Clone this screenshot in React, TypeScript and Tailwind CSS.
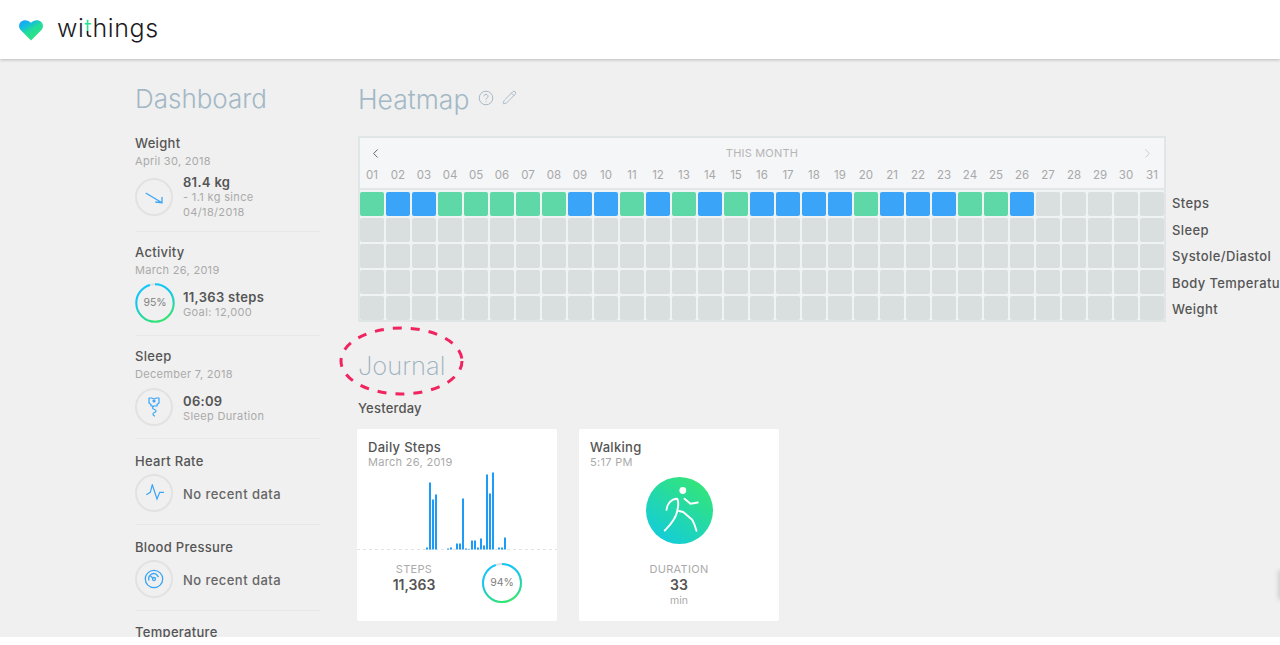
import React from "react";
import { Pencil, ChevronLeft, ChevronRight } from "lucide-react";

const days = Array.from({ length: 31 }, (_, i) => String(i + 1).padStart(2, "0"));
const steps = "gbbgggggbbgbgbgbbbbgbbbggb".split("");
const labels = ["Steps", "Sleep", "Systole/Diastol", "Body Temperature", "Weight"];
const bars = [2, 67, 50, 55, 0, 0, 0, 1, 2, 0, 6, 6, 51, 1, 0.6, 9, 9, 2, 11, 4, 75, 56, 77, 0, 2, 2, 12];

function IconCircle({ children }: { children: React.ReactNode }) {
  return (
    <div className="flex h-[38px] w-[38px] shrink-0 items-center justify-center rounded-full border-2 border-[#e2e2e2]">
      {children}
    </div>
  );
}

function Ring({ id, pct, size, label, r, sw }: { id: string; pct: number; size: number; label: string; r: number; sw: number }) {
  const c = 2 * Math.PI * r;
  return (
    <div className="relative flex shrink-0 items-center justify-center" style={{ width: size, height: size }}>
      <svg width={size} height={size} viewBox={`0 0 ${size} ${size}`} className="absolute inset-0">
        <defs>
          <linearGradient id={id} x1="1" y1="0.3" x2="0" y2="0.7">
            <stop offset="0" stopColor="#10c8fc" />
            <stop offset="0.35" stopColor="#10c8f0" />
            <stop offset="1" stopColor="#30e868" />
          </linearGradient>
        </defs>
        <circle cx={size / 2} cy={size / 2} r={r} fill="none" stroke="#dfdfdf" strokeWidth={sw} />
        <circle
          cx={size / 2}
          cy={size / 2}
          r={r}
          fill="none"
          stroke={`url(#${id})`}
          strokeWidth={sw}
          strokeDasharray={`${(c * pct) / 100} ${c}`}
          transform={`rotate(-90 ${size / 2} ${size / 2})`}
        />
      </svg>
      <span className="relative text-[10.5px] text-[#808080]">{label}</span>
    </div>
  );
}

function Section({ title, date, pt, gap, pb, children, last }: { title: string; date?: string; pt: string; gap: string; pb: string; children?: React.ReactNode; last?: boolean }) {
  return (
    <section className={`${pt} ${pb} ${last ? "" : "border-b border-[#e8e8e8]"}`}>
      <h3 className="h-[18px] text-[13px] leading-[18px] font-medium tracking-[0.3px] text-[#555]">{title}</h3>
      {date && <p className="h-[18px] text-[11px] leading-[18px] tracking-[0.3px] text-[#aaa]">{date}</p>}
      {children && <div className={`flex h-[38px] items-center gap-[10px] ${gap}`}>{children}</div>}
    </section>
  );
}

function NoData() {
  return <span className="mt-[4px] text-[13px] font-medium tracking-[0.45px] text-[#666]">No recent data</span>;
}

export default function App() {
  return (
    <div className="relative h-[645px] w-[1280px] overflow-hidden bg-white font-['Inter',sans-serif]">
      <header className="relative z-10 flex h-[59px] items-center bg-white pl-[19px] shadow-[0_1px_3px_rgba(0,0,0,0.22)]">
        <svg width="24" height="21" viewBox="0 0 25 22" className="mt-[1px]">
          <defs>
            <linearGradient id="heart" x1="0" y1="0" x2="0.7" y2="1">
              <stop offset="0" stopColor="#1c9cf8" />
              <stop offset="0.28" stopColor="#12b8e8" />
              <stop offset="0.55" stopColor="#22dc9c" />
              <stop offset="1" stopColor="#2fe67c" />
            </linearGradient>
          </defs>
          <path d="M12.5 21.5 1.6 10.5C-.7 8-.4 4 1.9 1.9 4.4-.5 9.4-.6 12.5 3c3.1-3.6 8.1-3.5 10.6-1.1 2.3 2.1 2.6 6.1.3 8.6Z" fill="url(#heart)" />
        </svg>
        <span className="mb-[2px] ml-[14px] text-[25px] leading-none font-light tracking-[0.6px] text-[#1b1b1f]">
          wi<span className="bg-[linear-gradient(#2fe08f_60%,#1b1b1f_60%)] bg-clip-text text-transparent">t</span>hings
        </span>
      </header>

      <div className="flex h-[578px] overflow-hidden bg-[#f0f0f0] pl-[135px]">
        <aside className="w-[185px] shrink-0">
          <h1 className="mt-[20px] h-[40px] text-[26px] leading-[40px] font-light text-[#a3b8c5]">Dashboard</h1>
          <Section title="Weight" date="April 30, 2018" pt="pt-[15px]" gap="mt-[8px]" pb="pb-[15px]">
            <IconCircle>
              <svg width="20" height="20" viewBox="0 0 20 20" fill="none" stroke="#3aa5f5" strokeWidth="1.3">
                <path d="M1.700 6 18 15.700M18 10 18 15.700 11.300 15" />
              </svg>
            </IconCircle>
            <div className="mt-[1px] w-[100px]">
              <div className="text-[13px] leading-[15px] font-semibold tracking-[0.3px] text-[#555]">81.4 kg</div>
              <div className="text-[11px] leading-[15px] tracking-[0.35px] text-[#aaa]">- 1.1 kg since 04/18/2018</div>
            </div>
          </Section>
          <Section title="Activity" date="March 26, 2019" pt="pt-[11px]" gap="mt-[5px]" pb="pb-[13px]">
            <Ring id="r1" pct={95} size={40} r={18.7} sw={2} label="95%" />
            <div className="mt-[4px] ml-[-2px]">
              <div className="text-[13px] leading-[15px] font-semibold tracking-[0.3px] text-[#555]">11,363 steps</div>
              <div className="text-[11px] leading-[15px] tracking-[0.35px] text-[#aaa]">Goal: 12,000</div>
            </div>
          </Section>
          <Section title="Sleep" date="December 7, 2018" pt="pt-[11px]" gap="mt-[5px]" pb="pb-[12px]">
            <IconCircle>
              <svg width="14" height="22" viewBox="0 0 14 22" fill="none" stroke="#3aa5f5" strokeWidth="1.200" strokeLinejoin="round" strokeLinecap="round">
                <path d="M2 2h2.500l2.500 1 2.500-1H12v5l-2 1.500v1.500H4V8.500L2 7zM7 10c-2.500 1.500-1.500 3 .5 3.500s2 2.500 0 3-2 2.500 0 3.500" />
                <circle cx="7" cy="5" r="1" fill="#3aa5f5" />
              </svg>
            </IconCircle>
            <div className="mt-[4px]">
              <div className="text-[13px] leading-[15px] font-semibold tracking-[0.3px] text-[#555]">06:09</div>
              <div className="text-[11px] leading-[15px] tracking-[0.35px] text-[#aaa]">Sleep Duration</div>
            </div>
          </Section>
          <Section title="Heart Rate" pt="pt-[13px]" gap="mt-[4px]" pb="pb-[12px]">
            <IconCircle>
              <svg width="20" height="18" viewBox="0 0 20 18" fill="none" stroke="#3aa5f5" strokeWidth="1.200">
                <path d="M2.300 10.700 6.300 8.300 8.300.7 13 15 15.700 8.300H20" />
              </svg>
            </IconCircle>
            <NoData />
          </Section>
          <Section title="Blood Pressure" pt="pt-[13px]" gap="mt-[4px]" pb="pb-[12px]">
            <IconCircle>
              <svg width="20" height="20" viewBox="0 0 20 20" fill="none" stroke="#3aa5f5" strokeWidth="1.300">
                <circle cx="10" cy="10" r="8.700" />
                <path d="M5 11.500a5.200 5.200 0 0 1 7-6.500l2.500 3" />
                <circle cx="10" cy="10" r="1.500" />
                <path d="M8.800 9 6.500 7" />
              </svg>
            </IconCircle>
            <NoData />
          </Section>
          <Section title="Temperature" pt="pt-[12px]" gap="" pb="" last />
        </aside>

        <main className="ml-[38px] flex-1">
          <div className="mt-[20px] flex h-[40px] items-center">
            <h1 className="text-[26.5px] leading-[40px] font-light text-[#a3b8c5]">Heatmap</h1>
            <svg width="16" height="16" viewBox="0 0 16 16" fill="none" stroke="#a9b9c4" strokeWidth="1" className="ml-[9px] mb-[3px]">
              <circle cx="8" cy="8" r="6.800" />
              <path d="M6 6.300a2 2 0 1 1 3 1.800c-.7.400-1 .8-1 1.500M8 11.200v.8" />
            </svg>
            <Pencil size={15} strokeWidth={1.300} color="#a0b2be" className="ml-[8px] mb-[3px]" />
          </div>

          <div className="mt-[17px] flex items-start">
            <div className="h-[186px] w-[808px] shrink-0 border-2 border-[#e0e5e6] bg-[#f0f3f3]">
              <div className="h-[52px] border-b-2 border-[#e4e7e8] bg-[#f5f6f8]">
                <div className="relative flex h-[30px] items-center justify-center text-[11px] tracking-[0.2px] text-[#b5b5b5]">
                  <ChevronLeft size={15} strokeWidth={1.600} color="#666" className="absolute left-[8px]" />
                  THIS MONTH
                  <ChevronRight size={15} strokeWidth={1.600} color="#ccc" className="absolute right-[9px]" />
                </div>
                <div className="grid grid-cols-[repeat(31,24px)] gap-x-[2px]">
                  {days.map((d) => (
                    <span key={d} className="text-center text-[11.5px] leading-[14px] text-[#a8a8a8]">{d}</span>
                  ))}
                </div>
              </div>
              <div className="mt-[2px] grid grid-cols-[repeat(31,24px)] gap-[2px]">
                {Array.from({ length: 155 }, (_, i) => {
                  const s = i < 31 ? steps[i] : undefined;
                  return (
                    <div
                      key={i}
                      className={`h-[24px] rounded-[2px] ${s === "g" ? "bg-[#5ed8a6]" : s === "b" ? "bg-[#39a4f8]" : "bg-[#d9dfdf]"}`}
                    />
                  );
                })}
              </div>
            </div>
            <div className="mt-[54px] ml-[6px] shrink-0">
              {labels.map((l) => (
                <div key={l} className="h-[26.500px] whitespace-nowrap text-[13px] leading-[26.500px] font-medium tracking-[0.4px] text-[#555]">{l}</div>
              ))}
            </div>
          </div>

          <h2 className="mt-[23px] h-[40px] text-[25.5px] leading-[40px] font-extralight text-[#9cb0bd]">Journal</h2>
          <div className="mt-[13px] h-[18px] text-[13px] leading-[18px] font-medium tracking-[0.2px] text-[#555]">Yesterday</div>

          <div className="mt-[12px] -ml-[1px] flex gap-[22px]">
            <div className="h-[192px] w-[200px] rounded-[2px] bg-white">
              <div className="px-[11px] pt-[11px]">
                <div className="text-[13px] leading-[15px] font-medium tracking-[0.3px] text-[#555]">Daily Steps</div>
                <div className="text-[11px] leading-[15px] tracking-[0.3px] text-[#aaa]">March 26, 2019</div>
              </div>
              <svg width="200" height="80" viewBox="0 0 200 80" className="block">
                <line x1="0" y1="79.500" x2="200" y2="79.500" stroke="#e3e3e3" strokeDasharray="3 3" />
                {bars.map((h, i) => (
                  <rect key={i} x={69 + i * 3} y={79.500 - h} width="2" height={h} fill="#1d9bf5" />
                ))}
              </svg>
              <div className="mt-[11px] flex items-start">
                <div className="ml-[7px] w-[100px] text-center">
                  <div className="text-[11px] leading-[16px] tracking-[0.3px] text-[#aaa]">STEPS</div>
                  <div className="text-[14px] leading-[16px] font-semibold text-[#555]">11,363</div>
                </div>
                <div className="mt-[2px] ml-[18px]">
                  <Ring id="r2" pct={94} size={40} r={19} sw={2} label="94%" />
                </div>
              </div>
            </div>

            <div className="flex h-[192px] w-[200px] flex-col rounded-[2px] bg-white">
              <div className="px-[11px] pt-[11px]">
                <div className="text-[13px] leading-[15px] font-medium tracking-[0.3px] text-[#555]">Walking</div>
                <div className="text-[11px] leading-[15px] tracking-[0.3px] text-[#aaa]">5:17 PM</div>
              </div>
              <div className="mx-auto mt-[7px] h-[67px] w-[67px] rounded-full bg-[linear-gradient(215deg,#38e86a,#0fc9e8)]">
                <svg width="67" height="67" viewBox="0 0 67 67" fill="none" stroke="#fff" strokeWidth="1.900" strokeLinecap="round" strokeLinejoin="round">
                  <circle cx="36.800" cy="13.500" r="3.400" fill="#fff" stroke="none" />
                  <path d="M20.500 32.800C21 27 25 22 31.200 21.800 33.500 26 32 30 31 35 29.500 42.800 24 48 18.800 53.500" />
                  <path d="M38.500 21.800 44.500 26.800 51.800 25.500" />
                  <path d="M33 34 37.200 35 46.200 42.800C48 46 49.500 50 50.500 53.800" />
                </svg>
              </div>
              <div className="mt-[17px] text-center">
                <div className="text-[11px] leading-[16px] tracking-[0.3px] text-[#aaa]">DURATION</div>
                <div className="text-[14px] leading-[16px] font-semibold text-[#555]">33</div>
                <div className="text-[10.500px] leading-[16px] text-[#aaa]">min</div>
              </div>
            </div>
          </div>
        </main>
      </div>

      <svg width="130" height="74" viewBox="0 0 130 74" className="absolute left-[336px] top-[324px]" fill="none">
        <ellipse cx="65.500" cy="37" rx="60.500" ry="33" stroke="#f0245f" strokeWidth="3" strokeDasharray="9 9" />
      </svg>
      <div className="absolute left-[1278px] top-[570px] h-[30px] w-[6px] rounded-full bg-[#cfcfcf] blur-[2px]" />
    </div>
  );
}
